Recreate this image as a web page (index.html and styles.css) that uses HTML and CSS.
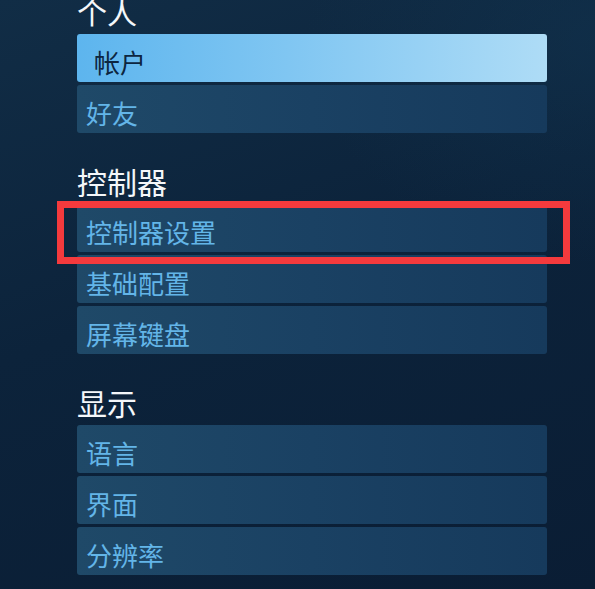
FILE: index.html
```html
<!DOCTYPE html>
<html lang="zh-CN">
<head>
<meta charset="utf-8">
<title>设置</title>
<link rel="stylesheet" href="styles.css">
</head>
<body>
<div class="page">
  <section class="group">
    <h2 class="group-title">个人</h2>
    <ul class="menu">
      <li class="item selected">帐户</li>
      <li class="item">好友</li>
    </ul>
  </section>
  <section class="group">
    <h2 class="group-title">控制器</h2>
    <ul class="menu">
      <li class="item">控制器设置</li>
      <li class="item">基础配置</li>
      <li class="item">屏幕键盘</li>
    </ul>
  </section>
  <section class="group">
    <h2 class="group-title">显示</h2>
    <ul class="menu">
      <li class="item">语言</li>
      <li class="item">界面</li>
      <li class="item">分辨率</li>
    </ul>
  </section>
  <div class="annotation"></div>
</div>
</body>
</html>
```
FILE: styles.css
```css
html, body {
  margin: 0;
  padding: 0;
  width: 595px;
  height: 589px;
  overflow: hidden;
}
body {
  background:
    radial-gradient(ellipse 420px 320px at 600px 40px, rgba(20, 60, 90, 0.35), rgba(20, 60, 90, 0) 70%),
    linear-gradient(160deg, #112d46 0%, #0c233b 45%, #0a1d34 100%);
  font-family: "Noto Sans CJK SC", "Noto Sans", sans-serif;
}
.page {
  position: relative;
  margin-top: -7px;
  padding-left: 77px;
  width: 470px;
  display: flex;
  flex-direction: column;
  gap: 30px;
}
.group {
  display: flex;
  flex-direction: column;
}
.group-title {
  margin: 0 0 5px 0;
  font-size: 30px;
  line-height: 36px;
  font-weight: 400;
  color: #f4f7fa;
}
.menu {
  list-style: none;
  margin: 0;
  padding: 0;
  display: flex;
  flex-direction: column;
  gap: 3px;
}
.item {
  box-sizing: border-box;
  height: 48px;
  padding: 8px 0 0 9px;
  display: flex;
  align-items: center;
  border-radius: 3px;
  font-size: 26px;
  line-height: 40px;
  color: #63b5e8;
  background: linear-gradient(90deg, #1f4968 0%, #1a4163 50%, #163a5c 100%);
}
.item.selected {
  padding-left: 17px;
  color: #0d2640;
  background: linear-gradient(90deg, #5db5ee 0%, #80c6f2 45%, #aedcf6 100%);
}
.annotation {
  position: absolute;
  left: 57px;
  top: 208px;
  width: 513px;
  height: 63px;
  box-sizing: border-box;
  border: 7px solid #f43a3d;
}
```
